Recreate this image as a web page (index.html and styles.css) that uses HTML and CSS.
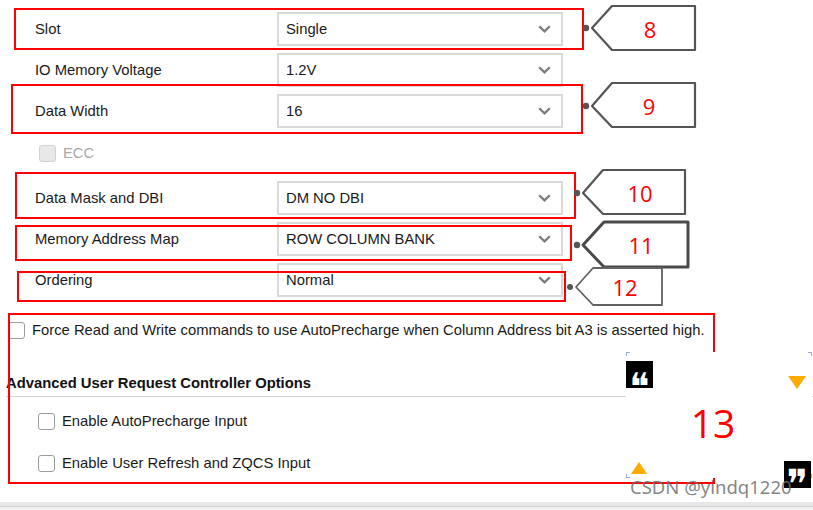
FILE: index.html
```html
<!DOCTYPE html>
<html lang="en">
<head>
<meta charset="utf-8">
<title>Memory Controller Options</title>
<link rel="stylesheet" href="styles.css">
</head>
<body>
<div class="page">
  <div class="form">
    <div class="row">
      <span class="label">Slot</span>
      <div class="select"><span>Single</span><svg class="chev" width="13" height="8" viewBox="0 0 13 8"><path d="M1.2 1.2 L6.5 6.4 L11.8 1.2" /></svg></div>
    </div>
    <div class="row">
      <span class="label">IO Memory Voltage</span>
      <div class="select"><span>1.2V</span><svg class="chev" width="13" height="8" viewBox="0 0 13 8"><path d="M1.2 1.2 L6.5 6.4 L11.8 1.2" /></svg></div>
    </div>
    <div class="row">
      <span class="label">Data Width</span>
      <div class="select"><span>16</span><svg class="chev" width="13" height="8" viewBox="0 0 13 8"><path d="M1.2 1.2 L6.5 6.4 L11.8 1.2" /></svg></div>
    </div>
    <div class="ecc-row">
      <span class="cb disabled"></span><span class="muted">ECC</span>
    </div>
    <div class="row">
      <span class="label">Data Mask and DBI</span>
      <div class="select"><span>DM NO DBI</span><svg class="chev" width="13" height="8" viewBox="0 0 13 8"><path d="M1.2 1.2 L6.5 6.4 L11.8 1.2" /></svg></div>
    </div>
    <div class="row">
      <span class="label">Memory Address Map</span>
      <div class="select"><span>ROW COLUMN BANK</span><svg class="chev" width="13" height="8" viewBox="0 0 13 8"><path d="M1.2 1.2 L6.5 6.4 L11.8 1.2" /></svg></div>
    </div>
    <div class="row">
      <span class="label">Ordering</span>
      <div class="select"><span>Normal</span><svg class="chev" width="13" height="8" viewBox="0 0 13 8"><path d="M1.2 1.2 L6.5 6.4 L11.8 1.2" /></svg></div>
    </div>
  </div>

  <div class="force">
    <span class="cb"></span><span>Force Read and Write commands to use AutoPrecharge when Column Address bit A3 is asserted high.</span>
  </div>

  <div class="section">
    <div class="section-title">Advanced User Request Controller Options</div>
    <div class="opts">
      <div class="opt"><span class="cb"></span><span>Enable AutoPrecharge Input</span></div>
      <div class="opt"><span class="cb"></span><span>Enable User Refresh and ZQCS Input</span></div>
    </div>
  </div>

  <div class="strip"></div>

  <div class="anno">
    <div class="rb rb8"></div>
    <div class="rb rb9"></div>
    <div class="rb rb10"></div>
    <div class="rb rb11"></div>
    <div class="rb rb12"></div>
    <div class="rb rb13"></div>

    <svg class="tags" width="813" height="510" viewBox="0 0 813 510">
      <polygon class="tag" points="592,28 612,6 695,6 695,50 612,50" />
      <circle class="dot" cx="586" cy="28" r="3.2" />
      <polygon class="tag" points="592,106 612,83 695,83 695,127 612,127" />
      <circle class="dot" cx="586" cy="106" r="3.2" />
      <polygon class="tag" points="583,193 603,170 685,170 685,214 603,214" />
      <circle class="dot" cx="577" cy="193" r="3.2" />
      <polygon class="tag thick" points="583,245 604,222 688,222 688,267 604,267" />
      <circle class="dot" cx="577" cy="245" r="3.2" />
      <polygon class="tag thin" points="576,287 593,268 662,268 662,305 593,305" />
      <circle class="dot" cx="570" cy="287" r="3" />
    </svg>

    <div class="num n8">8</div>
    <div class="num n9">9</div>
    <div class="num n10">10</div>
    <div class="num n11">11</div>
    <div class="num n12">12</div>

    <div class="panel">
      <span class="corner c-tl"></span>
      <span class="corner c-tr"></span>
      <span class="corner c-bl"></span>
      <span class="corner c-br"></span>
      <div class="quote q-open">❝</div>
      <div class="tri-down"></div>
      <div class="num13">13</div>
      <div class="tri-up"></div>
      <div class="quote q-close">❞</div>
    </div>

    <div class="watermark">CSDN @yindq1220</div>
  </div>
</div>
</body>
</html>
```

FILE: styles.css
```css
html, body {
  margin: 0;
  padding: 0;
  background: #ffffff;
}

body {
  font-family: "Liberation Sans", Arial, sans-serif;
  font-size: 14.8px;
  color: #1a1a1a;
}

.page {
  position: relative;
  width: 813px;
  height: 510px;
  overflow: hidden;
  display: flex;
  flex-direction: column;
}

/* ---------- form rows ---------- */
.form {
  display: flex;
  flex-direction: column;
  gap: 7px;
  padding-top: 12px;
}

.row {
  display: flex;
  align-items: center;
  height: 34px;
  padding-left: 35px;
}

.label {
  width: 242px;
  flex: none;
}

.select {
  box-sizing: border-box;
  width: 286px;
  height: 34px;
  border: 2px solid #d9d9d9;
  display: flex;
  align-items: center;
  justify-content: space-between;
  padding: 0 10px 0 7px;
  background: #fff;
}

.chev path {
  fill: none;
  stroke: #7c7c7c;
  stroke-width: 2.3;
}

.ecc-row {
  display: flex;
  align-items: center;
  gap: 7px;
  height: 36px;
  padding-bottom: 3px;
  padding-left: 39px;
}

.cb {
  box-sizing: border-box;
  flex: none;
  width: 17px;
  height: 17px;
  border: 1.5px solid #9c9c9c;
  border-radius: 3px;
  background: #fff;
}

.cb.disabled {
  background: #e8e8e8;
  border-color: #d2d2d2;
}

.muted {
  color: #a8a8a8;
}

.force {
  display: flex;
  align-items: center;
  gap: 7px;
  height: 34px;
  margin-top: 16px;
  padding-left: 8px;
  white-space: nowrap;
}

.section {
  margin-top: 26px;
  padding-left: 6px;
}

.section-title {
  font-weight: bold;
  line-height: 20px;
  padding-bottom: 3px;
  border-bottom: 1px solid #d3d3d3;
  color: #111;
}

.opts {
  display: flex;
  flex-direction: column;
  gap: 8px;
  padding-top: 7px;
  padding-left: 32px;
}

.opt {
  display: flex;
  align-items: center;
  gap: 7px;
  height: 34px;
}

.strip {
  margin-top: auto;
  height: 8px;
  background: linear-gradient(#e7e7e7 0 4px, #d3d3d3 4px 5px, #f1f1f1 5px);
}

/* ---------- annotation overlay ---------- */
.anno {
  position: absolute;
  left: 0;
  top: 0;
  width: 813px;
  height: 510px;
  pointer-events: none;
}

.rb {
  position: absolute;
  box-sizing: border-box;
  border: 2px solid #ff0000;
}
.rb8  { left: 14px; top: 8px;   width: 570px; height: 42px; }
.rb9  { left: 11px; top: 84px;  width: 572px; height: 50px; }
.rb10 { left: 15px; top: 172px; width: 561px; height: 47px; }
.rb11 { left: 15px; top: 225px; width: 557px; height: 36px; }
.rb12 { left: 17px; top: 271px; width: 549px; height: 31px; }
.rb13 { left: 8px;  top: 313px; width: 707px; height: 171px; }

.tags {
  position: absolute;
  left: 0;
  top: 0;
}

.tag {
  fill: #ffffff;
  stroke: #555555;
  stroke-width: 2.2;
  stroke-linejoin: round;
}
.tag.thick { stroke-width: 3; stroke: #4a4a4a; }
.tag.thin  { stroke-width: 1.8; stroke: #626262; }

.dot { fill: #555555; }

.num {
  position: absolute;
  width: 40px;
  height: 28px;
  line-height: 28px;
  text-align: center;
  font-family: "Open Sans", "Noto Sans", sans-serif;
  font-size: 22px;
  color: #ff0000;
}
.n8  { left: 630px; top: 15px; }
.n9  { left: 629px; top: 92px; }
.n10 { left: 620px; top: 179px; }
.n11 { left: 621px; top: 231px; }
.n12 { left: 605px; top: 273px; }

.panel {
  position: absolute;
  left: 626px;
  top: 352px;
  width: 186px;
  height: 126px;
  background: #ffffff;
}

.corner {
  position: absolute;
  width: 3px;
  height: 3px;
  border-color: #93a9ee;
  border-style: solid;
  border-width: 0;
}
.c-tl { left: 0; top: 0; border-left-width: 1px; border-top-width: 1px; }
.c-tr { right: 0; top: 0; border-right-width: 1px; border-top-width: 1px; }
.c-bl { left: 0; bottom: 0; border-left-width: 1px; border-bottom-width: 1px; }
.c-br { right: 0; bottom: 0; border-right-width: 1px; border-bottom-width: 1px; }

.quote {
  position: absolute;
  width: 27px;
  height: 27px;
  background: #000000;
  color: #ffffff;
  font-family: "DejaVu Sans", sans-serif;
  text-align: center;
}
.q-open {
  left: 0;
  top: 9px;
  font-size: 38px;
  line-height: 52px;
}
.q-close {
  left: 158px;
  top: 109px;
  font-size: 40px;
  line-height: 46px;
}

.tri-down {
  position: absolute;
  left: 162px;
  top: 24px;
  width: 0;
  height: 0;
  border-left: 9px solid transparent;
  border-right: 9px solid transparent;
  border-top: 13px solid #ffab00;
}

.tri-up {
  position: absolute;
  left: 5px;
  top: 110px;
  width: 0;
  height: 0;
  border-left: 8.5px solid transparent;
  border-right: 8.5px solid transparent;
  border-bottom: 12px solid #ffab00;
}

.num13 {
  position: absolute;
  left: 47px;
  top: 47px;
  width: 80px;
  height: 48px;
  line-height: 48px;
  text-align: center;
  font-family: "Open Sans", "Noto Sans", sans-serif;
  font-size: 39px;
  color: #ff0000;
}

.watermark {
  position: absolute;
  left: 630px;
  top: 475px;
  line-height: 24px;
  font-family: "Noto Sans", "Open Sans", sans-serif;
  font-size: 18.5px;
  color: rgba(110, 110, 110, 0.85);
  white-space: nowrap;
}
```
